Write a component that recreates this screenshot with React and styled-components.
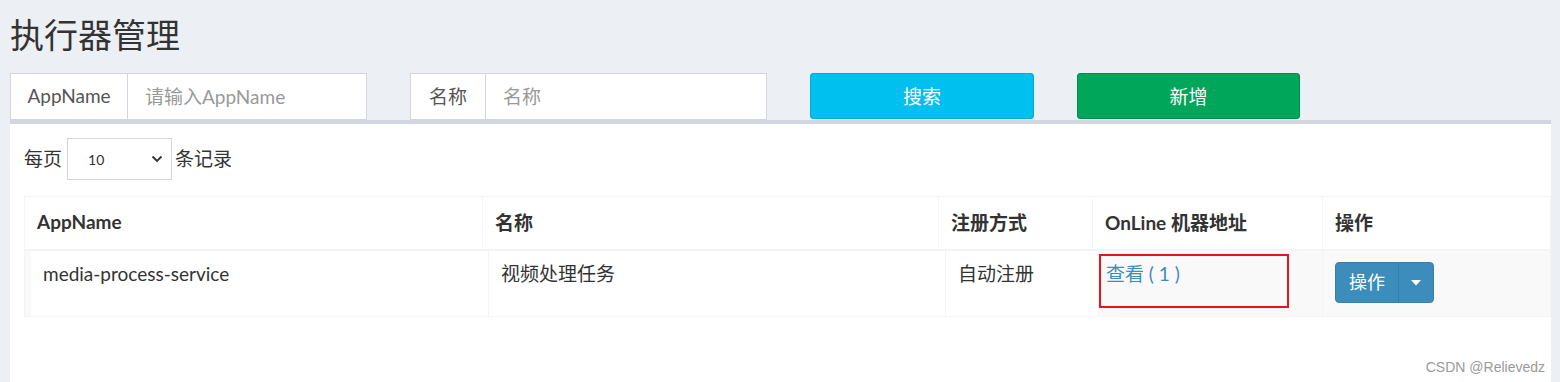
import styled, { createGlobalStyle } from "styled-components";

const GlobalStyle = createGlobalStyle`
  body {
    margin: 0;
    background: #ecf0f5;
    font-family: Lato, "Noto Sans CJK SC", sans-serif;
    color: #333;
    overflow: hidden;
  }
`;

const Page = styled.div`
  width: 1560px;
  height: 382px;
  padding: 0 0 0 10px;
  box-sizing: border-box;
  display: flex;
  flex-direction: column;
`;

const Title = styled.h1`
  margin: 0;
  padding-top: 14px;
  height: 73px;
  flex-shrink: 0;
  box-sizing: border-box;
  font-family: "Noto Sans CJK SC", sans-serif;
  font-size: 34px;
  line-height: 40px;
  font-weight: 400;
  color: #333;
`;

const SearchBar = styled.div`
  display: flex;
  gap: 43px;
  height: 47px;
  flex-shrink: 0;
`;

const InputGroup = styled.div`
  display: flex;
  width: 357px;
  height: 47px;
  box-sizing: border-box;
  border: 1px solid #d2d6de;
  background: #fff;
`;

const Addon = styled.div`
  width: ${(p) => p.width}px;
  border-right: 1px solid #d2d6de;
  display: flex;
  align-items: center;
  justify-content: center;
  padding-bottom: 2px;
  font-size: 19px;
  color: #555;
`;

const Placeholder = styled.div`
  flex: 1;
  display: flex;
  align-items: center;
  padding: 0 0 2px 17px;
  font-size: 19px;
  color: #999;
`;

const Button = styled.div`
  width: ${(p) => p.width}px;
  height: 46px;
  box-sizing: border-box;
  border-radius: 3px;
  border: 1px solid ${(p) => p.border};
  background: ${(p) => p.bg};
  color: #fff;
  font-size: 19px;
  padding-bottom: 2px;
  display: flex;
  align-items: center;
  justify-content: center;
`;

const Panel = styled.div`
  position: relative;
  flex: 1;
  width: 1541px;
  background: #fff;
  border-top: 4px solid #d2d6de;
  padding: 14px 0 0 14px;
  box-sizing: border-box;
`;

const LengthRow = styled.div`
  display: flex;
  align-items: center;
  font-size: 19px;
  color: #333;
  height: 42px;
  padding-bottom: 3px;
  box-sizing: border-box;
`;

const SelectBox = styled.div`
  width: 105px;
  height: 42px;
  box-sizing: border-box;
  margin: 3px 3px 0 5px;
  border: 1px solid #d2d6de;
  display: flex;
  align-items: center;
  justify-content: space-between;
  padding: 0 8px 0 20px;
  font-size: 14px;
  color: #333;
`;

const Table = styled.div`
  margin-top: 16px;
  border-top: 1px solid #f4f4f4;
  border-left: 1px solid #f4f4f4;
`;

const HeadRow = styled.div`
  display: grid;
  grid-template-columns: 458px 456px 154px 230px 1fr;
  height: 52px;
  border-bottom: 2px solid #f4f4f4;
`;

const HeadCell = styled.div`
  display: flex;
  align-items: center;
  padding: 0 12px 4px;
  font-size: 19px;
  font-weight: 700;
  color: #333;
  border-right: 1px solid #f4f4f4;
`;

const BodyRow = styled.div`
  display: grid;
  grid-template-columns: 6px 458px 457px 153px 224px 1fr;
  height: 65px;
  border-bottom: 1px solid #f4f4f4;
`;

const Cell = styled.div`
  position: relative;
  padding: 9px ${(p) => (p.tight ? 7 : 12)}px 0;
  font-size: 19px;
  line-height: 28px;
  color: #333;
  background: ${(p) => (p.shade ? "#f9f9f9" : "#fff")};
  border-right: 1px solid #f4f4f4;
`;

const Link = styled.span`
  color: #3c8dbc;
`;

const Highlight = styled.div`
  position: absolute;
  left: 0;
  top: 3px;
  width: 190px;
  height: 54px;
  box-sizing: border-box;
  border: 2px solid #e3161d;
`;

const SplitButton = styled.div`
  display: inline-flex;
  margin-top: 2px;
  height: 41px;
  border-radius: 4px;
  background: #3c8dbc;
  border: 1px solid #367fa9;
  box-sizing: border-box;
  overflow: hidden;
`;

const SplitMain = styled.div`
  width: 62px;
  display: flex;
  align-items: center;
  justify-content: center;
  padding-bottom: 2px;
  color: #fff;
  font-size: 18px;
  border-right: 1px solid #367fa9;
`;

const SplitCaret = styled.div`
  width: 34px;
  display: flex;
  align-items: center;
  justify-content: center;
`;

const Watermark = styled.div`
  position: absolute;
  right: 6px;
  bottom: 7px;
  font-family: "Liberation Sans", Arial, sans-serif;
  font-size: 14px;
  color: #9a9a9a;
`;

export default function App() {
  return (
    <>
      <GlobalStyle />
      <Page>
        <Title>执行器管理</Title>
        <SearchBar>
          <InputGroup>
            <Addon width={116}>AppName</Addon>
            <Placeholder>请输入AppName</Placeholder>
          </InputGroup>
          <InputGroup>
            <Addon width={74}>名称</Addon>
            <Placeholder>名称</Placeholder>
          </InputGroup>
          <Button width={224} bg="#00c0ef" border="#00acd6">
            搜索
          </Button>
          <Button width={223} bg="#00a65a" border="#008d4c">
            新增
          </Button>
        </SearchBar>
        <Panel>
          <LengthRow>
            每页
            <SelectBox>
              10
              <svg width="12" height="8" viewBox="0 0 12 8">
                <polyline
                  points="1.5,1.5 6,6 10.5,1.5"
                  fill="none"
                  stroke="#333"
                  strokeWidth="1.8"
                />
              </svg>
            </SelectBox>
            条记录
          </LengthRow>
          <Table>
            <HeadRow>
              <HeadCell>AppName</HeadCell>
              <HeadCell>名称</HeadCell>
              <HeadCell>注册方式</HeadCell>
              <HeadCell>OnLine 机器地址</HeadCell>
              <HeadCell>操作</HeadCell>
            </HeadRow>
            <BodyRow>
              <Cell shade />
              <Cell>media-process-service</Cell>
              <Cell>视频处理任务</Cell>
              <Cell>自动注册</Cell>
              <Cell shade tight>
                <Link>查看 ( 1 )</Link>
                <Highlight />
              </Cell>
              <Cell shade>
                <SplitButton>
                  <SplitMain>操作</SplitMain>
                  <SplitCaret>
                    <svg width="10" height="6" viewBox="0 0 10 6">
                      <polygon points="0,0 10,0 5,5.5" fill="#fff" />
                    </svg>
                  </SplitCaret>
                </SplitButton>
              </Cell>
            </BodyRow>
          </Table>
          <Watermark>CSDN @Relievedz</Watermark>
        </Panel>
      </Page>
    </>
  );
}
